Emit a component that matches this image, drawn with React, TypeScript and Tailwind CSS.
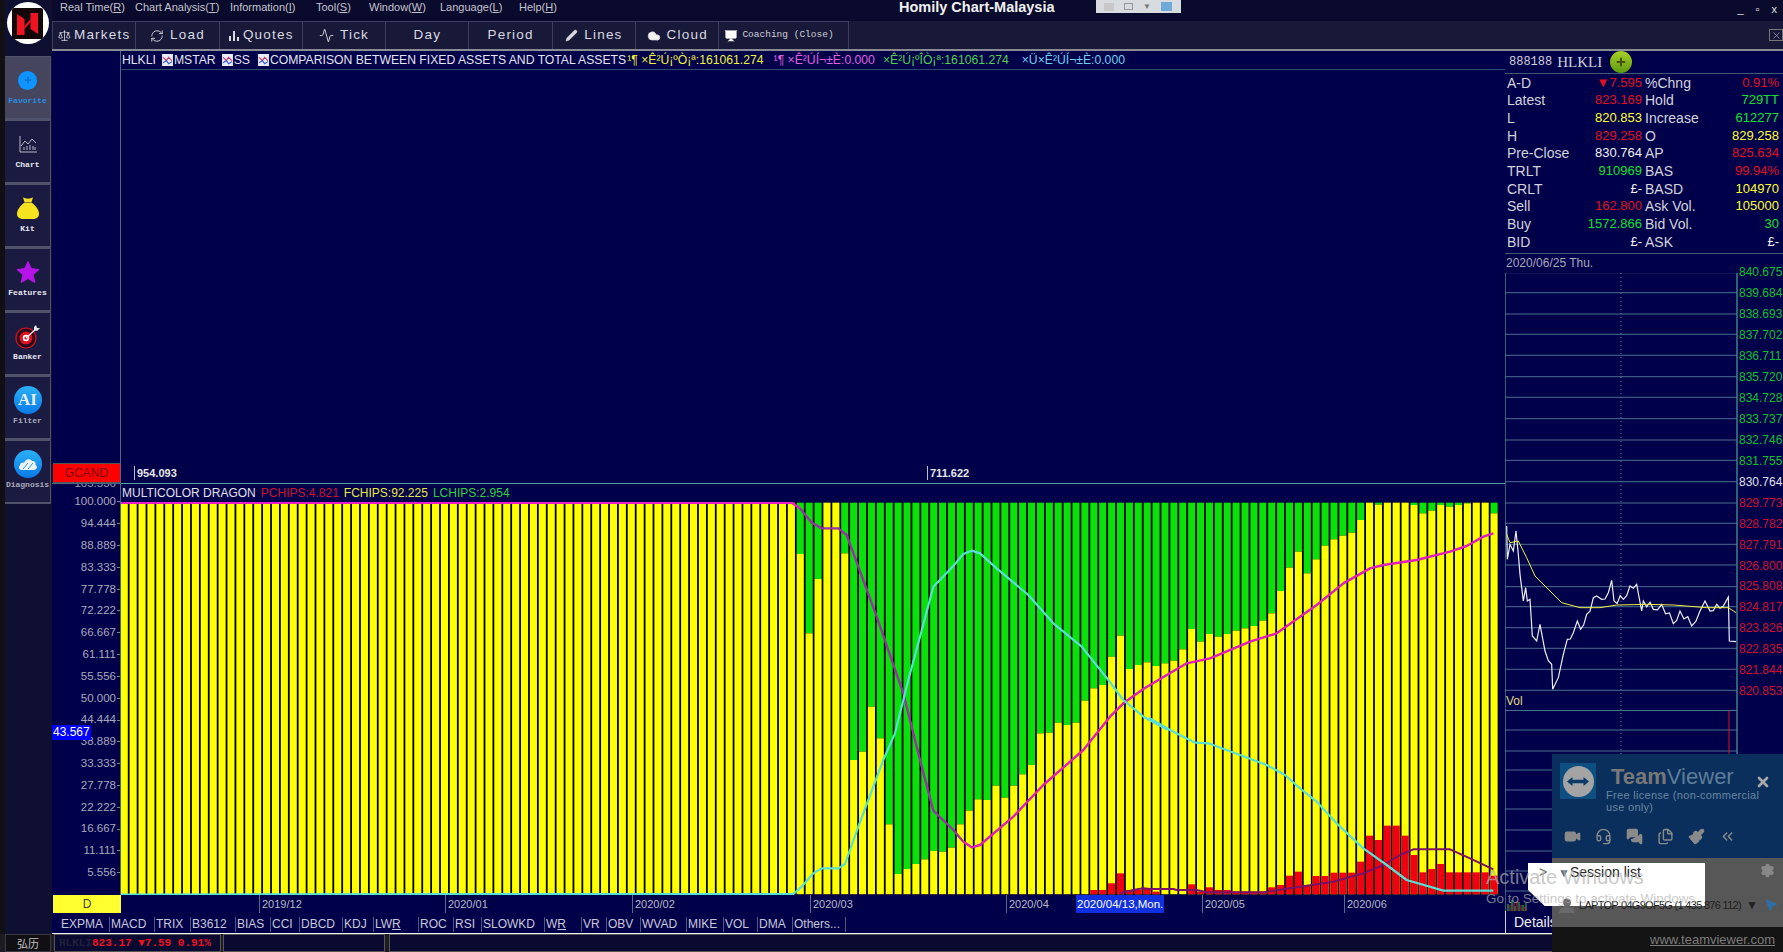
import {
  Scale,
  RefreshCw,
  Activity,
  Pencil,
  Cloud,
  Video,
  Headset,
  MessagesSquare,
  Files,
  Paintbrush,
  ChevronsLeft,
  Settings,
  MousePointer2,
  Plus,
  X,
  Presentation,
} from "lucide-react";

const menu = [
  { label: "Real Time(", key: "R", w: "w-[75px]" },
  { label: "Chart Analysis(", key: "T", w: "w-[95px]" },
  { label: "Information(", key: "I", w: "w-[86px]" },
  { label: "Tool(", key: "S", w: "w-[53px]" },
  { label: "Window(", key: "W", w: "w-[71px]" },
  { label: "Language(", key: "L", w: "w-[79px]" },
  { label: "Help(", key: "H", w: "w-[50px]" },
];

// yellow tops read off the chart in crop units, bar 76 onwards
const yellowTops = [
  192, 430, 267, 38, 38, 190, 810, 785, 650, 745, 1003, 1152, 1137, 1122, 1108, 1083, 1085, 1073, 1003, 962, 928, 930,
  887, 923, 887, 853, 825, 730, 728, 698, 705, 698, 632, 595, 585, 500, 437, 537, 525, 517, 528, 520, 512, 478, 417,
  455, 432, 440, 432, 422, 415, 408, 392, 370, 303, 233, 185, 250, 208, 167, 148, 137, 128, 90, 38, 44, 38, 38, 38, 45,
  70, 62, 45, 50, 45, 40, 38, 38, 70,
];

const redTops: Record<number, number> = {
  109: 1200, 110: 1200, 111: 1180, 112: 1150, 113: 1200, 114: 1200, 115: 1195, 116: 1205,
  120: 1183, 121: 1205, 122: 1192, 123: 1200, 124: 1200, 125: 1205, 126: 1205, 127: 1205, 128: 1205,
  129: 1192, 130: 1185, 131: 1157, 132: 1145, 133: 1185, 134: 1158, 135: 1158, 136: 1148, 137: 1148,
  138: 1148, 139: 1115, 140: 1037, 141: 1050, 142: 1007, 143: 1007, 144: 1037, 145: 1095, 146: 1147,
  147: 1137, 148: 1122, 149: 1147, 150: 1147, 151: 1147, 152: 1147, 153: 1147, 154: 1157,
};

const toY = (z: number) => 490 + z / 3;
const barX = (i: number) => 120.7 + i * 8.895;

const left = (pts: number[][]) => pts.map(([x, y]) => `${780 + x / 3},${490 + y / 3}`).join(" ");
const right = (pts: number[][]) => pts.map(([x, y]) => `${1150 + x / 3},${490 + y / 3}`).join(" ");
const mini = (pts: number[][]) => pts.map(([x, y]) => `${1490 + x / 3},${330 + y / 3}`).join(" ");

// the tick line is noisy between the points read off the crop
const jagged = (pts: number[][]) => {
  const out: number[][] = [];
  pts.forEach((p, i) => {
    const next = pts[i + 1];
    out.push(p);
    if (!next) return;
    const steps = Math.floor((next[0] - p[0]) / 9);
    for (let s = 1; s < steps; s++) {
      const t = s / steps;
      const wobble = (s % 2 ? 1 : -1) * (5 + ((s * 7) % 5) * 2);
      out.push([p[0] + (next[0] - p[0]) * t, p[1] + (next[1] - p[1]) * t + wobble]);
    }
  });
  return out;
};

const cyanLine =
  "121,894.5 " +
  left([
    [0, 1212], [40, 1212], [65, 1190], [100, 1150], [125, 1135], [175, 1135], [195, 1122], [235, 1010], [265, 930],
    [310, 810], [345, 730], [385, 570], [420, 440], [460, 290], [520, 228], [550, 192], [575, 182], [600, 190],
    [650, 235], [745, 315], [820, 400], [905, 470], [985, 570], [1030, 630], [1090, 680], [1160, 718],
  ]) +
  " " +
  right([
    [0, 685], [60, 720], [135, 758], [175, 760], [270, 795], [350, 825], [405, 855], [450, 895], [500, 935],
    [560, 1000], [640, 1075], [710, 1125], [770, 1170], [880, 1202], [1030, 1202],
  ]);

const magentaGreen = left([
  [60, 55], [95, 98], [125, 115], [175, 115], [200, 135], [290, 380], [370, 610], [420, 810], [460, 962], [520, 1020], [550, 1055],
]);

const magentaYellow =
  left([
    [550, 1055], [575, 1072], [600, 1065], [700, 980], [790, 885], [910, 780], [990, 680], [1030, 640], [1090, 597],
  ]) +
  " " +
  right([
    [0, 585], [110, 520], [180, 505], [300, 455], [380, 430], [500, 345], [580, 280], [660, 235], [700, 225],
    [800, 210], [900, 185], [950, 168], [1000, 140], [1030, 130],
  ]);

const purpleLine =
  left([[1020, 1210], [1060, 1200], [1090, 1195]]) +
  " " +
  right([
    [0, 1197], [70, 1197], [80, 1200], [140, 1200], [170, 1207], [340, 1207], [420, 1195], [550, 1175], [640, 1150],
    [700, 1125], [750, 1095], [790, 1078], [900, 1078], [960, 1105], [1030, 1138],
  ]);

const priceLine = mini([
  ...jagged([
    [50, 585], [52, 685], [60, 640], [70, 660], [78, 600], [85, 670], [90, 730], [100, 810], [107, 770], [112, 810],
    [120, 805], [127, 915], [140, 930], [150, 880], [165, 960], [185, 1000], [188, 1075], [205, 1040], [220, 970],
    [232, 925], [250, 905], [262, 870], [272, 895], [290, 850], [320, 795], [335, 805], [355, 785], [365, 748],
    [372, 810], [400, 805], [420, 765], [440, 760], [455, 840], [460, 810], [490, 835], [515, 820], [550, 878],
    [570, 840], [605, 885], [630, 840], [645, 810], [660, 840], [680, 820], [700, 825], [715, 798],
  ]),
  [718, 930],
  [738, 932],
]);

const avgLine = mini([
  [50, 610], [60, 635], [85, 630], [110, 680], [135, 735], [165, 765], [215, 815], [270, 830], [330, 830], [380, 822],
  [470, 820], [550, 822], [650, 830], [715, 830], [738, 845],
]);

const leftAxis = [
  "100.000", "94.444", "88.889", "83.333", "77.778", "72.222", "66.667", "61.111", "55.556", "50.000", "44.444",
  "38.889", "33.333", "27.778", "22.222", "16.667", "11.111", "5.556",
];

const priceAxis = [
  { v: "840.675", c: "text-[#10c030]" },
  { v: "839.684", c: "text-[#10c030]" },
  { v: "838.693", c: "text-[#10c030]" },
  { v: "837.702", c: "text-[#10c030]" },
  { v: "836.711", c: "text-[#10c030]" },
  { v: "835.720", c: "text-[#10c030]" },
  { v: "834.728", c: "text-[#10c030]" },
  { v: "833.737", c: "text-[#10c030]" },
  { v: "832.746", c: "text-[#10c030]" },
  { v: "831.755", c: "text-[#10c030]" },
  { v: "830.764", c: "text-[#e0e0ea]" },
  { v: "829.773", c: "text-[#d01030]" },
  { v: "828.782", c: "text-[#d01030]" },
  { v: "827.791", c: "text-[#d01030]" },
  { v: "826.800", c: "text-[#d01030]" },
  { v: "825.808", c: "text-[#d01030]" },
  { v: "824.817", c: "text-[#d01030]" },
  { v: "823.826", c: "text-[#d01030]" },
  { v: "822.835", c: "text-[#d01030]" },
  { v: "821.844", c: "text-[#d01030]" },
  { v: "820.853", c: "text-[#d01030]" },
];

const red = "text-[#e01020]";
const green = "text-[#10e030]";
const yellow = "text-[#ffff30]";
const white = "text-[#f0f0f0]";

const quote = [
  ["A-D", "▼7.595", red, "%Chng", "0.91%", red],
  ["Latest", "823.169", red, "Hold", "729TT", green],
  ["L", "820.853", yellow, "Increase", "612277", green],
  ["H", "829.258", red, "O", "829.258", yellow],
  ["Pre-Close", "830.764", white, "AP", "825.634", red],
  ["TRLT", "910969", green, "BAS", "99.94%", red],
  ["CRLT", "£-", white, "BASD", "104970", yellow],
  ["Sell", "162.800", red, "Ask Vol.", "105000", yellow],
  ["Buy", "1572.866", green, "Bid Vol.", "30", green],
  ["BID", "£-", white, "ASK", "£-", white],
];

const tabs = [
  { t: "EXPMA", w: "w-[50px]" },
  { t: "MACD", w: "w-[45px]" },
  { t: "TRIX", w: "w-[36px]" },
  { t: "B3612", w: "w-[45px]" },
  { t: "BIAS", w: "w-[35px]" },
  { t: "CCI", w: "w-[29px]" },
  { t: "DBCD", w: "w-[43px]" },
  { t: "KDJ", w: "w-[31px]" },
  { t: "LW", u: "R", w: "w-[45px]" },
  { t: "ROC", w: "w-[35px]" },
  { t: "RSI", w: "w-[28px]" },
  { t: "SLOWKD", w: "w-[63px]" },
  { t: "W", u: "R", w: "w-[37px]" },
  { t: "VR", w: "w-[25px]" },
  { t: "OBV", w: "w-[34px]" },
  { t: "WVAD", w: "w-[46px]" },
  { t: "MIKE", w: "w-[37px]" },
  { t: "VOL", w: "w-[34px]" },
  { t: "DMA", w: "w-[35px]" },
  { t: "Others...", w: "w-[53px]" },
];

const dates = [
  { t: "2019/12", l: "left-[138px]" },
  { t: "2020/01", l: "left-[324px]" },
  { t: "2020/02", l: "left-[511px]" },
  { t: "2020/03", l: "left-[689px]" },
  { t: "2020/04", l: "left-[885px]" },
  { t: "2020/05", l: "left-[1081px]" },
  { t: "2020/06", l: "left-[1223px]" },
];

function Logo() {
  return (
    <div className="mx-auto mt-[2px] flex h-[42px] w-[42px] items-center justify-center rounded-full bg-white">
      <svg viewBox="0 0 31 31" className="h-[31px] w-[31px]">
        <rect width="31" height="31" rx="2" fill="#120608" />
        <path d="M5 6 L12.5 11 V27 H5 Z" fill="#ee1422" />
        <path d="M18.5 5 H26 V26 L18.5 21 Z" fill="#ee1422" />
        <path d="M12.5 18 L18.5 11 V14 L12.5 21 Z" fill="#ee1422" />
      </svg>
    </div>
  );
}

function RailTile({ label, tone, active, children }: { label: string; tone: string; active?: boolean; children: React.ReactNode }) {
  return (
    <div
      className={`flex h-[64px] w-[46px] flex-col items-center border-b-2 border-r border-t border-[#50526c] pt-[8px] ${
        active ? "bg-[#45455e]" : "bg-[#1b1b42]"
      }`}
    >
      <div className="flex h-[30px] w-[30px] items-center justify-center">{children}</div>
      <span className={`font-['Liberation_Mono',monospace] text-[8px] font-bold leading-[11px] ${tone}`}>{label}</span>
    </div>
  );
}

function Rail() {
  return (
    <div className="flex h-full w-[52px] shrink-0 flex-col border-l-[5px] border-[#101014] bg-[#0f0f32]">
      <div className="h-[56px] w-[47px] shrink-0 -translate-x-[1px]">
        <Logo />
      </div>
      <RailTile label="Favorite" tone="text-[#2b8ee0]" active>
        <div className="flex h-[19px] w-[19px] items-center justify-center rounded-full bg-[#0e94ff]">
          <Plus className="h-[10px] w-[10px] text-[#0b6cc0]" strokeWidth={3} />
        </div>
      </RailTile>
      <RailTile label="Chart" tone="text-[#e8e8f0]">
        <svg viewBox="0 0 20 20" className="h-[20px] w-[20px]" fill="none" stroke="#b8b8c4" strokeWidth="1">
          <path d="M2 2 V18 H19" />
          <path d="M3 12 L7 7 L10 10 L14 5 L18 9" />
          <path d="M6 16 V13 M9 16 V12 M12 16 V11 M15 16 V12 M17 16 V13" />
        </svg>
      </RailTile>
      <RailTile label="Kit" tone="text-[#e8e8f0]">
        <svg viewBox="0 0 24 24" className="h-[24px] w-[24px]">
          <path d="M7 1.5 C10 3 14 3 17 1.5 L15.5 6 H8.5 Z" fill="#f7e21f" />
          <path d="M8.5 6.5 H15.5 C20 10 23 14 23 18 C23 21.5 20 23 17 23 H7 C4 23 1 21.5 1 18 C1 14 4 10 8.5 6.5 Z" fill="#f7e21f" />
        </svg>
      </RailTile>
      <RailTile label="Features" tone="text-[#e8e8f0]">
        <svg viewBox="0 0 24 24" className="h-[24px] w-[24px]">
          <path d="M12 1.5 L15.2 8.6 L23 9.6 L17.2 14.8 L18.8 22.5 L12 18.6 L5.2 22.5 L6.8 14.8 L1 9.6 L8.8 8.6 Z" fill="#b414e6" stroke="#b414e6" strokeLinejoin="round" />
        </svg>
      </RailTile>
      <RailTile label="Banker" tone="text-[#e8e8f0]">
        <svg viewBox="0 0 26 26" className="h-[26px] w-[26px]">
          <circle cx="11" cy="15" r="10" fill="#220818" stroke="#e01020" strokeWidth="1.2" />
          <circle cx="11" cy="15" r="6.5" fill="#e01020" />
          <circle cx="11" cy="15" r="3.2" fill="#fff" />
          <circle cx="11" cy="15" r="1.6" fill="#e01020" />
          <path d="M11 15 L21 6" stroke="#e8e8e8" strokeWidth="1.4" />
          <path d="M19 4 L21 2 L22 5 L25 5 L22 8 L19 7 Z" fill="#e8e8e8" />
        </svg>
      </RailTile>
      <RailTile label="Filter" tone="text-[#a8a8b8]">
        <div className="flex h-[28px] w-[28px] items-center justify-center rounded-full bg-gradient-to-b from-[#2cb0f4] to-[#0a78e8] font-['Liberation_Serif',serif] text-[17px] font-bold text-[#e8eef4]">
          AI
        </div>
      </RailTile>
      <RailTile label="Diagnosis" tone="text-[#a8a8b8]">
        <div className="flex h-[28px] w-[28px] items-center justify-center rounded-full bg-gradient-to-b from-[#2cb0f4] to-[#0a78e8]">
          <svg viewBox="0 0 20 14" className="h-[14px] w-[20px]">
            <path d="M4 13 C1 13 0 10 2 8.5 C2 6 5 5 6 6 C7 2 12 1 14 4 C17 4 18 6 17.5 8 C20 9 19 13 16 13 Z" fill="#f0f4f8" />
            <path d="M5 12 L10 6 M10 12 L15 6" stroke="#2a98e8" strokeWidth="1" />
          </svg>
        </div>
      </RailTile>
    </div>
  );
}

function MenuBar() {
  return (
    <div className="flex h-[21px] shrink-0 items-start bg-[#0a0a2c]">
      <div className="flex w-[847px] pl-[8px] text-[11px] leading-[14px] text-[#c4c4cc]">
        {menu.map((m) => (
          <span key={m.key} className={`${m.w} whitespace-nowrap`}>
            {m.label}
            <u>{m.key}</u>)
          </span>
        ))}
      </div>
      <span className="-mt-[2px] whitespace-nowrap text-[14.5px] font-bold leading-[18px] text-[#f0f0f0]">Homily Chart-Malaysia</span>
      <div className="ml-[41px] flex h-[13px] w-[85px] items-center justify-center gap-[10px] bg-[#d8dce0]">
        <span className="h-[8px] w-[10px] bg-[#c8c8c8]" />
        <span className="h-[7px] w-[9px] border border-[#999]" />
        <span className="text-[8px] leading-[8px] text-[#777]">▼</span>
        <span className="h-[9px] w-[11px] bg-[#70a8d8]" />
      </div>
      <div className="ml-auto flex gap-[12px] pr-[6px] pt-[2px] text-[11px] leading-[14px] text-[#e0e0e0]">
        <span>_</span>
        <span>▫</span>
        <span>x</span>
      </div>
    </div>
  );
}

function ToolButton({ label, icon }: { label: string; icon?: React.ReactNode }) {
  return (
    <div className="flex h-full w-[83.3px] items-center justify-center gap-[3px] border-r border-[#3d3f62] text-[13.5px] tracking-[1.2px] text-[#d8d8e0]">
      {icon}
      <span>{label}</span>
    </div>
  );
}

function Toolbar() {
  return (
    <div className="flex h-[28px] shrink-0 items-center bg-[#181938]">
      <div className="flex h-full border-l border-t border-[#3d3f62]">
        <ToolButton label="Markets" icon={<Scale className="h-[13px] w-[13px] shrink-0" strokeWidth={1.5} />} />
        <ToolButton label="Load" icon={<RefreshCw className="mr-[3px] h-[14px] w-[14px] shrink-0" strokeWidth={1.5} />} />
        <ToolButton
          label="Quotes"
          icon={
            <svg viewBox="0 0 12 12" className="h-[12px] w-[12px]" fill="#d8d8e0">
              <rect x="1" y="6" width="2" height="5" />
              <rect x="5" y="1" width="2" height="10" />
              <rect x="9" y="7" width="2" height="4" />
            </svg>
          }
        />
        <ToolButton label="Tick" icon={<Activity className="mr-[3px] h-[15px] w-[15px] shrink-0" strokeWidth={1.5} />} />
        <ToolButton label="Day" />
        <ToolButton label="Period" />
        <ToolButton label="Lines" icon={<Pencil className="mr-[3px] h-[13px] w-[13px] shrink-0" fill="#d8d8e0" strokeWidth={1} />} />
        <ToolButton label="Cloud" icon={<Cloud className="mr-[3px] h-[14px] w-[14px] shrink-0" fill="#f0f0f0" strokeWidth={1} />} />
        <div className="flex h-full w-[130px] items-center gap-[4px] border-r border-[#3d3f62] pl-[5px] font-['Liberation_Mono',monospace] text-[9.5px] text-[#d0d0d8]">
          <Presentation className="h-[14px] w-[14px] shrink-0 text-white" fill="#fff" strokeWidth={1} />
          <span className="whitespace-nowrap">Coaching (Close)</span>
        </div>
      </div>
      <div className="ml-auto flex h-[12px] w-[14px] items-center justify-center border border-[#777] text-[#d0d0d0]">
        <X className="h-[11px] w-[11px]" strokeWidth={1.2} />
      </div>
    </div>
  );
}

function MiniIcon() {
  return (
    <svg viewBox="0 0 10 11" className="mx-[1px] h-[12px] w-[11px] shrink-0">
      <rect width="10" height="11" fill="#e8ecf8" />
      <path d="M1 3 L4 6 L6 3 L9 6" stroke="#d03060" fill="none" />
      <path d="M1 8 L4 6 L6 9 L9 7" stroke="#3050d0" fill="none" />
    </svg>
  );
}

function UpperPane() {
  return (
    <div className="flex h-[432px] shrink-0">
      <div className="flex w-[69px] shrink-0 flex-col justify-end border-r border-[#4a6a80] pl-[1px]">
        <div className="flex h-[20px] items-center justify-center border-y border-[#555] bg-[#ff0000] text-[12px] leading-none text-[#800010]">
          GCAND
        </div>
      </div>
      <div className="relative flex-1">
        <div className="flex h-[19px] items-center whitespace-nowrap border-b border-[#2c4a70] pl-[1px] text-[12.2px] text-[#e4e4ec]">
          <span className="mr-[5px]">HLKLI</span>
          <MiniIcon />
          <span className="mr-[5px]">MSTAR</span>
          <MiniIcon />
          <span className="mr-[7px]">SS</span>
          <MiniIcon />
          <span>COMPARISON BETWEEN FIXED ASSETS AND TOTAL ASSETS</span>
          <span className="ml-[1px] text-[#f0f040]">¹¶ ×Ê²Ú¡ºÒ¡ª:161061.274</span>
          <span className="ml-[10px] text-[#e060e0]">¹¶ ×Ê²ÚÍ¬±È:0.000</span>
          <span className="ml-[8px] text-[#50d050]">×Ê²Ú¡ºÎÒ¡ª:161061.274</span>
          <span className="ml-[13px] text-[#70d0f0]">×Ü×Ê²ÚÍ¬±È:0.000</span>
        </div>
        <span className="absolute left-[13px] top-[415px] border-l border-[#c0c0c0] pl-[2px] text-[11px] font-bold leading-[14px] text-[#e8e8e8]">954.093</span>
        <span className="absolute left-[806px] top-[415px] border-l border-[#c0c0c0] pl-[2px] text-[11px] font-bold leading-[14px] text-[#e8e8e8]">711.622</span>
      </div>
    </div>
  );
}

function LowerPane() {
  return (
    <div className="flex h-[412px] shrink-0">
      <div className="relative w-[69px] shrink-0 overflow-hidden border-r border-[#4a6a80]">
        <div className="h-[8px] overflow-hidden border-t border-[#4a6a80]">
          <div className="-mt-[7px] pr-[4px] text-right text-[11.5px] leading-[12px] text-[#9a9aae]">105.556</div>
        </div>
        {leftAxis.map((v) => (
          <div key={v} className="flex h-[21.82px] items-center justify-end text-[11.5px] text-[#a8a8bc]">
            <span>{v}</span>
            <span className="ml-[1px] h-px w-[3px] bg-[#6a8aa0]" />
          </div>
        ))}
        <span className="absolute left-0 top-[242px] bg-[#0000ff] px-[1px] text-[12px] leading-[15px] text-white">43.567</span>
      </div>
      <div className="flex-1">
        <div className="flex h-[19px] items-center gap-[5px] whitespace-nowrap border-t border-[#5a9aaa] pl-[1px] text-[12px] leading-none">
          <span className="text-[#e0e0e8]">MULTICOLOR DRAGON</span>
          <span className="text-[#d01030]">PCHIPS:4.821</span>
          <span className="text-[#e8e840]">FCHIPS:92.225</span>
          <span className="text-[#30d040]">LCHIPS:2.954</span>
        </div>
        <svg viewBox="121 502 1384 393" className="block h-[393px] w-[1384px]">
          <rect x="121" y="502.7" width="1377" height="391.5" fill="#000" />
          {Array.from({ length: 155 }, (_, i) => {
            const top = i < 76 ? 502.7 : toY(yellowTops[i - 76]);
            const rt = redTops[i];
            return (
              <g key={i}>
                {i >= 76 && <rect x={barX(i)} y="502.7" width="7.1" height={top - 502.7} fill="#0ae00a" />}
                <rect x={barX(i)} y={top} width="7.1" height={894.2 - top} fill="#ffff00" />
                {rt && <rect x={barX(i)} y={toY(rt)} width="7.1" height={894.2 - toY(rt)} fill="#f00010" />}
              </g>
            );
          })}
          <g fill="none" strokeLinejoin="round">
            <polyline points="121,502.7 780,502.7 791.7,502.7 800,508.3" stroke="#e81cc8" strokeWidth="2.4" />
            <polyline points={magentaGreen} stroke="#9a30a8" strokeWidth="2.4" />
            <polyline points={magentaYellow} stroke="#e01cc0" strokeWidth="2.4" />
            <polyline points={purpleLine} stroke="#7a1068" strokeWidth="2" />
            <polyline points={cyanLine} stroke="#58e0d8" strokeWidth="2.2" />
          </g>
        </svg>
      </div>
    </div>
  );
}

function DateAxis() {
  return (
    <div className="flex h-[18px] shrink-0">
      <div className="ml-[1px] flex w-[68px] shrink-0 items-center justify-center bg-[#ffff30] text-[12px] text-[#404040]">D</div>
      <div className="relative flex-1 text-[11px] leading-[18px] text-[#b8b8c8]">
        {dates.map((d) => (
          <span key={d.t} className={`absolute top-0 ${d.l} border-l border-[#50708a] pl-[2px]`}>
            {d.t}
          </span>
        ))}
        <span className="absolute left-[955px] top-0 bg-[#1030e0] px-[1px] text-[11.5px] text-white">2020/04/13,Mon.</span>
      </div>
    </div>
  );
}

function IndicatorTabs() {
  return (
    <div className="flex h-[19px] shrink-0 items-end pl-[8px] text-[12px] leading-[15px] text-[#c8c8d8]">
      {tabs.map((t) => (
        <span key={t.t + (t.u ?? "")} className={`${t.w} shrink-0 whitespace-nowrap border-r border-[#50587a] pl-[1px]`}>
          {t.t}
          {t.u && <u>{t.u}</u>}
        </span>
      ))}
    </div>
  );
}

function QuotePanel() {
  return (
    <>
      <div className="flex h-[23px] shrink-0 items-center border-b border-[#3c5a78] pl-[4px]">
        <span className="font-['Liberation_Mono',monospace] text-[12px] text-[#d0d0d8]">888188</span>
        <span className="ml-[5px] font-['Liberation_Serif',serif] text-[15px] text-[#d0d0d8]">HLKLI</span>
        <span className="ml-[8px] flex h-[22px] w-[22px] items-center justify-center rounded-full bg-gradient-to-b from-[#a8d028] to-[#5c9a10]">
          <Plus className="h-[12px] w-[12px] text-[#44500c]" strokeWidth={4} />
        </span>
      </div>
      <div className="shrink-0 border-b border-[#3c5a78] pb-[3px]">
        {quote.map((r) => (
          <div key={r[0]} className="grid h-[17.65px] grid-cols-[135px_137px] items-center pl-[2px] text-[13px] leading-none">
            <div className="flex justify-between">
              <span className="text-[14px] text-[#d4d4dc]">{r[0]}</span>
              <span className={r[2]}>{r[1]}</span>
            </div>
            <div className="flex justify-between pl-[3px]">
              <span className="text-[14px] text-[#d4d4dc]">{r[3]}</span>
              <span className={r[5]}>{r[4]}</span>
            </div>
          </div>
        ))}
      </div>
      <div className="h-[19px] shrink-0 pl-[1px] text-[12px] leading-[19px] text-[#a8a8b8]">2020/06/25 Thu.</div>
    </>
  );
}

function MiniChart() {
  const gridYs = [
    271.7, 291.7, 313, 333.3, 354.3, 375.7, 396.3, 417.7, 439, 459.3, 480.7, 502, 522.3, 543.3, 564, 585.7, 605.7, 626.7,
    647.3, 668.3, 689.3, 709.5, 729, 750, 769, 789, 808, 829, 850, 870, 890,
  ];
  return (
    <div className="relative flex h-[638px] shrink-0">
      <svg viewBox="1505 272 233 638" className="block h-[638px] w-[233px] shrink-0">
        {gridYs.map((y) => (
          <line key={y} x1="1505" x2="1737" y1={y} y2={y} stroke="#4a6e90" strokeWidth="1" />
        ))}
        <line x1="1621" x2="1621" y1="272" y2="910" stroke="#7080a0" strokeDasharray="1 3" />
        <line x1="1505" x2="1505" y1="272" y2="910" stroke="#3f8088" strokeWidth="1.5" />
        <line x1="1737" x2="1737" y1="272" y2="910" stroke="#3f8088" strokeWidth="1.5" />
        <line x1="1729" x2="1729" y1="710" y2="760" stroke="#e01020" />
        <polyline points={priceLine} fill="none" stroke="#eeeef4" strokeWidth="1.2" />
        <polyline points={avgLine} fill="none" stroke="#f0f040" strokeWidth="1" />
        <path d="M1508 910V903M1512 910V899M1515 910V905M1519 910V901M1523 910V904M1526 910V902" stroke="#20d040" />
        <path d="M1510 910V904M1514 910V902M1517 910V900M1521 910V904M1525 910V906" stroke="#e02020" />
      </svg>
      <span className="absolute left-[1px] top-[421px] text-[12px] leading-[14px] text-[#e0d880]">Vol</span>
      <div className="-mt-[11px] flex flex-col pl-[1px]">
        {priceAxis.map((p) => (
          <div key={p.v} className={`h-[20.95px] text-[12px] leading-[20px] ${p.c}`}>
            {p.v}
          </div>
        ))}
      </div>
    </div>
  );
}

function TeamViewer() {
  return (
    <div className="absolute bottom-0 right-0 flex h-[198px] w-[231px] flex-col">
      <div className="relative h-[104px] shrink-0 bg-[#0a2f5c]">
        <div className="absolute left-[8px] top-[9px] flex h-[36px] w-[36px] items-center justify-center bg-[#0d4f80]">
          <div className="flex h-[31px] w-[31px] items-center justify-center rounded-full bg-[#a4a4a4]">
            <svg viewBox="0 0 24 12" className="h-[11px] w-[22px]">
              <path d="M0 6 L6 1 V4 H18 V1 L24 6 L18 11 V8 H6 V11 Z" fill="#0a3a68" />
            </svg>
          </div>
        </div>
        <div className="absolute left-[59px] top-[9px] text-[22px] leading-[28px]">
          <span className="font-bold text-[#787878]">Team</span>
          <span className="text-[#5f7c98]">Viewer</span>
        </div>
        <div className="absolute left-[54px] top-[35px] w-[170px] text-[11px] leading-[12px] tracking-[0.3px] text-[#6a86a0]">
          Free license (non-commercial use only)
        </div>
        <X className="absolute right-[12px] top-[20px] h-[16px] w-[16px] text-[#a8a8a8]" strokeWidth={4} />
        <div className="absolute left-[12px] top-[74px] flex items-center gap-[14px] text-[#8a8a8a]">
          <Video className="h-[17px] w-[17px]" fill="#8a8a8a" />
          <Headset className="h-[17px] w-[17px]" />
          <MessagesSquare className="h-[17px] w-[17px]" fill="#8a8a8a" />
          <Files className="h-[17px] w-[17px]" />
          <Paintbrush className="h-[17px] w-[17px]" fill="#8a8a8a" />
          <ChevronsLeft className="h-[17px] w-[17px]" />
        </div>
      </div>
      <div className="relative flex-1 bg-[#575757]">
        <Settings className="absolute right-[8px] top-[5px] h-[15px] w-[15px] text-[#888]" fill="#888" />
        <div className="absolute -left-[24px] top-[5px] h-[43px] w-[177px] bg-white [clip-path:polygon(0_0,100%_0,100%_100%,9.4%_100%,0_63%)]" />
        <div className="absolute -left-[13px] top-[5px] flex h-[19px] items-center text-[14px] text-[#222]">
          <span className="w-[19px] text-[#666]">&gt;</span>
          <span className="w-[11px] text-[12px] text-[#5a6a80]">▼</span>
          <span className="ml-[1px]">Session list</span>
        </div>
        <div className="absolute left-[7px] top-[38px] flex w-[224px] items-center">
          <svg viewBox="0 0 16 15" className="h-[15px] w-[16px] shrink-0">
            <circle cx="8" cy="4.5" r="4" fill="#6a6a6a" />
            <path d="M0 15 C0 10 4 9 8 9 C12 9 16 10 16 15 Z" fill="#6a6a6a" />
          </svg>
          <span className="ml-[4px] shrink-0 whitespace-nowrap text-[11px] tracking-[-0.7px] text-[#1e1e1e]">LAPTOP-04G9OF5G (1 435 876 112)</span>
          <span className="ml-[5px] shrink-0 text-[12px] text-[#222]">▼</span>
          <MousePointer2 className="ml-[6px] h-[14px] w-[14px] shrink-0 text-[#2f6fa8]" fill="#2f6fa8" />
        </div>
      </div>
      <div className="flex h-[25px] shrink-0 items-center justify-end bg-[#141414] pr-[8px] text-[13px] text-[#7c7c7c] underline">
        www.teamviewer.com
      </div>
    </div>
  );
}

function StatusBar() {
  return (
    <div className="flex h-[18px] shrink-0 items-stretch gap-[2px] bg-[#1c1c22] pl-[5px] text-[11px] leading-[16px]">
      <div className="flex w-[46px] items-center justify-center border border-[#3a3a44] bg-[#101014] font-['Noto_Sans_CJK_SC',sans-serif] text-[#c0c0c0]">
        弘历
      </div>
      <div className="ml-[1px] flex w-[167px] items-center border border-[#555] bg-[#0a0a30] pl-[4px] font-['Liberation_Mono',monospace] font-bold text-[#f01020]">
        <span className="mr-[1px] w-[32px] overflow-hidden text-[#20203c]">HLKLI</span>
        823.17 ▼7.59 0.91%
      </div>
      <div className="w-[162px] border border-[#555] bg-[#0a0a30]" />
      <div className="ml-[2px] flex-1 border border-[#555] bg-[#0a0a30]" />
    </div>
  );
}

export default function App() {
  return (
    <div className="relative flex h-[952px] w-full flex-col overflow-hidden bg-[#00004a] font-['Liberation_Sans',sans-serif]">
      <div className="flex h-[934px] shrink-0">
        <Rail />
        <div className="flex min-w-0 flex-1 flex-col">
          <MenuBar />
          <Toolbar />
          <div className="flex flex-1 border-b-2 border-t-2 border-b-[#f0f0f0] border-t-[#8a8a92]">
            <div className="flex w-[1453px] shrink-0 flex-col">
              <UpperPane />
              <LowerPane />
              <DateAxis />
              <IndicatorTabs />
            </div>
            <div className="flex w-[278px] shrink-0 flex-col">
              <QuotePanel />
              <MiniChart />
              <div className="flex-1 border-l border-[#d0d0d8] pl-[8px] text-[14px] leading-[22px] text-[#f0f0f0]">Details</div>
            </div>
          </div>
        </div>
      </div>
      <StatusBar />
      <TeamViewer />
      <div className="pointer-events-none absolute left-[1486px] top-[864px] whitespace-nowrap text-[#b0b0b0]/70">
        <div className="text-[20px] leading-[26px]">Activate Windows</div>
        <div className="text-[13.5px] leading-[18px]">Go to Settings to activate Windows.</div>
      </div>
    </div>
  );
}
